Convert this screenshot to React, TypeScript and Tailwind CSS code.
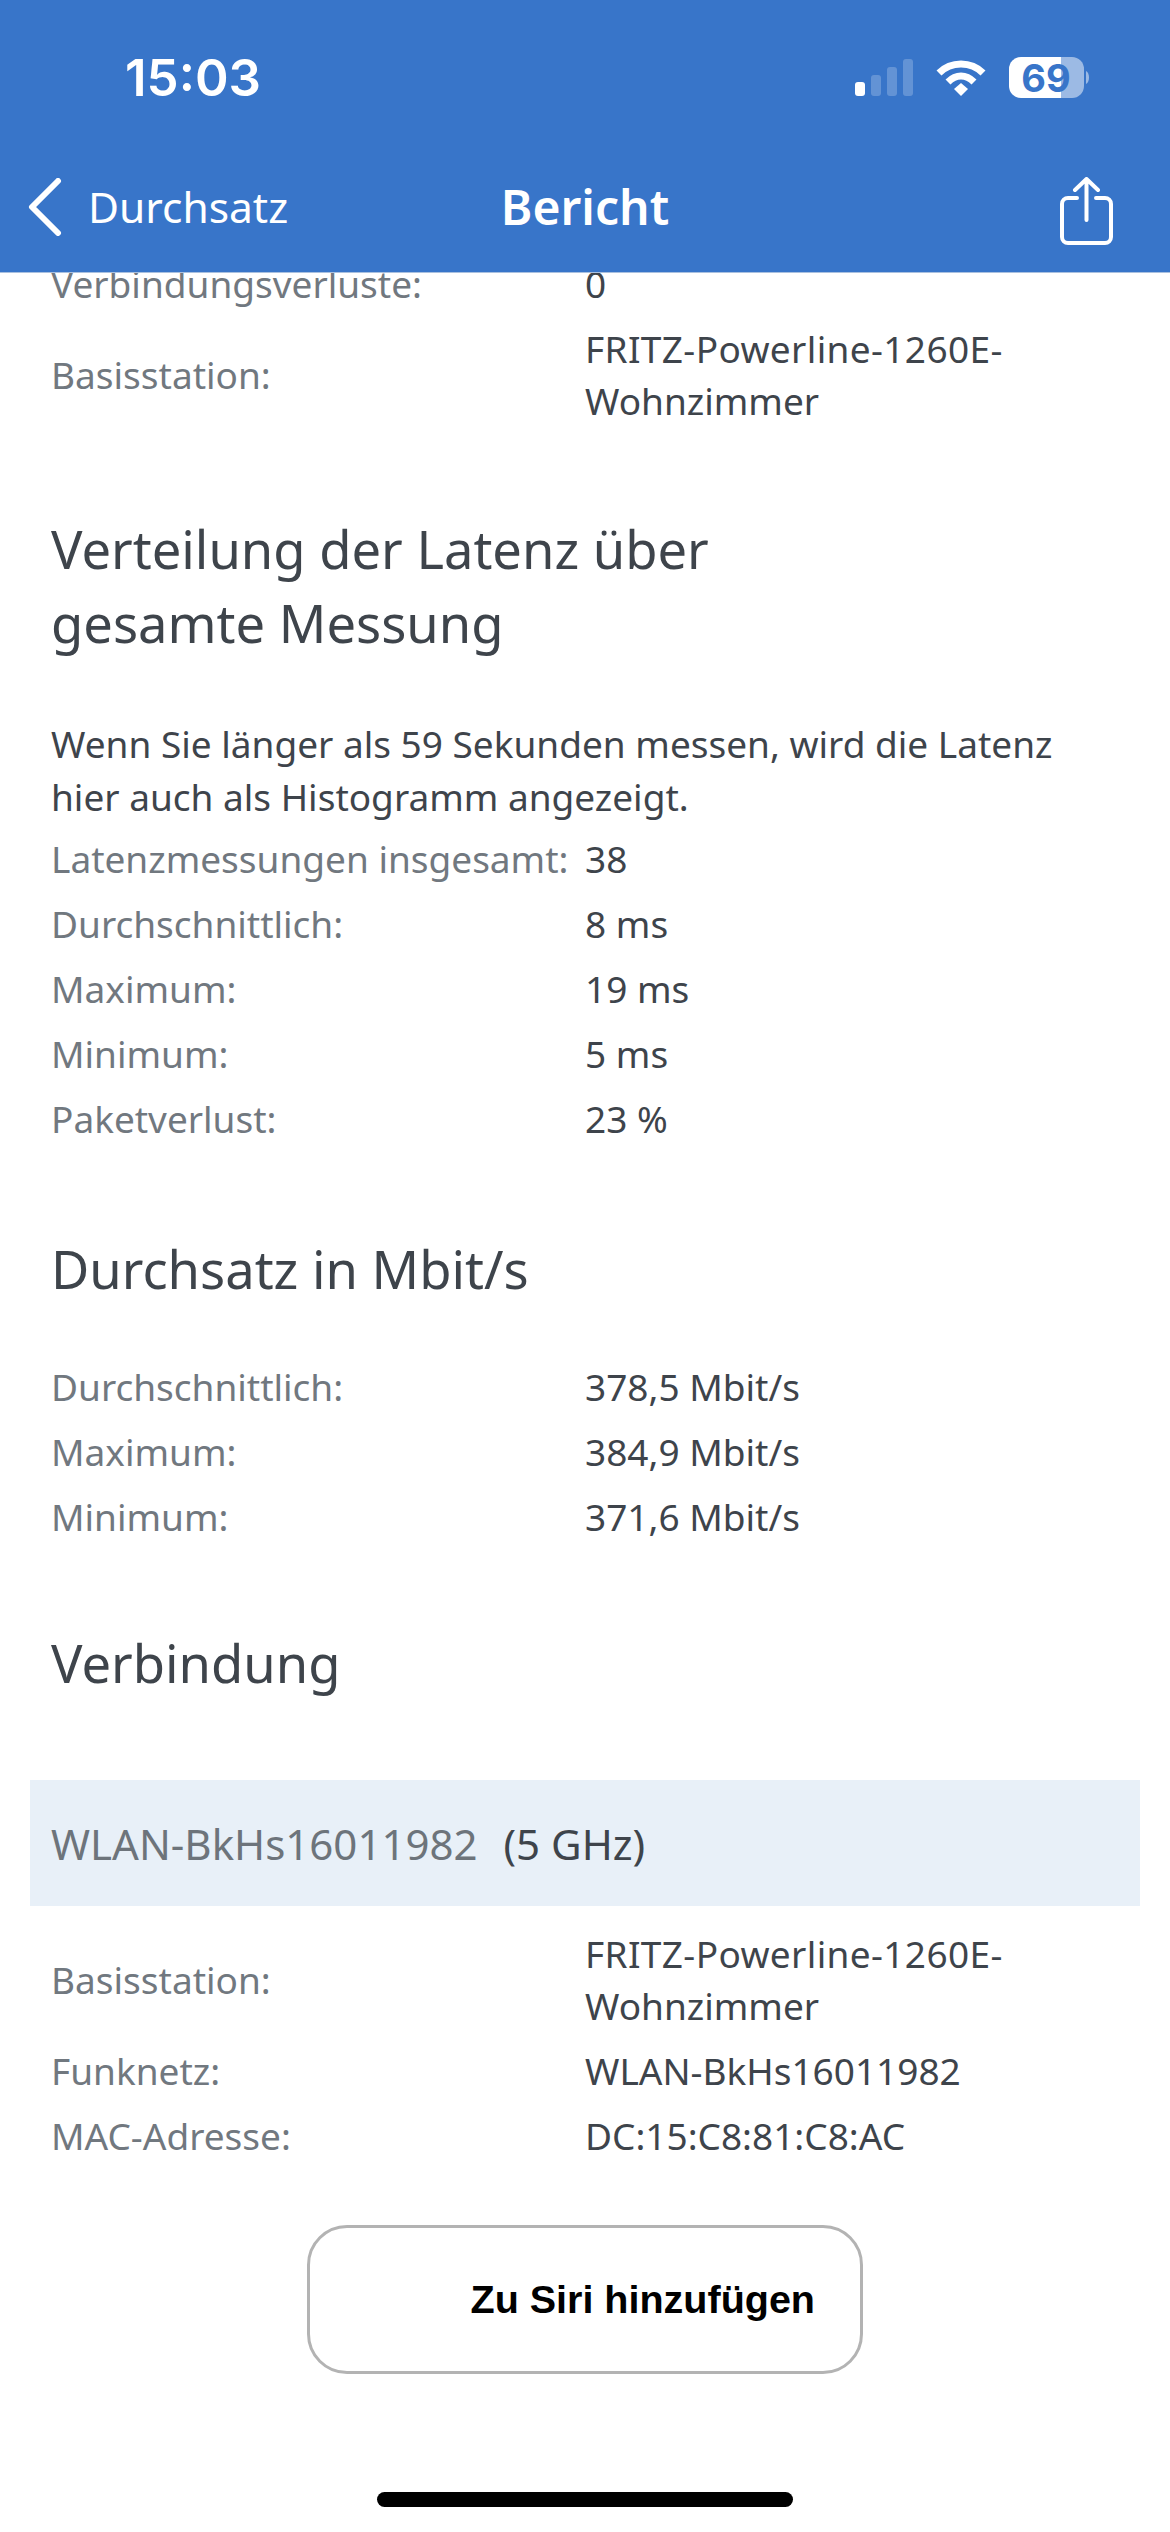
const font = { fontFamily: '"Noto Sans", sans-serif' };

function Row({ label, value, tall }: { label: string; value: React.ReactNode; tall?: boolean }) {
  return (
    <div className={`grid grid-cols-[534px_1fr] items-center pl-[51px] pr-[52px] text-[37px] leading-[52px] ${tall ? "h-[117px]" : "h-[65px]"}`}>
      <span className="text-[#71787f] whitespace-nowrap">{label}</span>
      <span className="text-[#3e444b]">{value}</span>
    </div>
  );
}

function Heading({ children, className }: { children: React.ReactNode; className: string }) {
  return <h2 className={`pl-[51px] pr-[52px] text-[52.500px] leading-[74px] text-[#3e444b] ${className}`}>{children}</h2>;
}

const Fritz = (
  <>
    <span className="tracking-[0.37px]">FRITZ-Powerline-1260E-</span>
    <br />
    Wohnzimmer
  </>
);

export default function App() {
  return (
    <div className="w-[1170px] h-[2532px] overflow-hidden bg-white flex flex-col" style={font}>
      <header className="h-[273px] shrink-0 bg-[#3875c9] text-white relative z-10 border-b border-[#a9c0df]">
        <div className="h-[157px] flex items-start justify-between">
          <span className="mt-[50px] ml-[125px] text-[51px] leading-[56px] font-semibold" style={{ fontFamily: '"Inter", sans-serif' }}>15:03</span>
          <div className="mt-[57px] mr-[79px] flex items-start">
            <svg width="58" height="37" viewBox="0 0 58 37" fill="white" className="mt-[2px]">
              <rect x="0" y="23" width="10" height="14" rx="3" />
              <rect x="16" y="16" width="10" height="21" rx="3" opacity="0.22" />
              <rect x="32" y="8" width="10" height="29" rx="3" opacity="0.22" />
              <rect x="48" y="0" width="10" height="37" rx="3" opacity="0.22" />
            </svg>
            <svg width="50" height="37" viewBox="0 0 50 37" fill="none" stroke="white" className="ml-[23px] mt-[2px]">
              <path d="M3 14 C15 2 35 2 47 14" strokeWidth="7" />
              <path d="M12 23 C20 15 30 15 38 23" strokeWidth="7" />
              <path d="M18 30 L25 24 L32 30 L25 37 Z" fill="white" stroke="none" />
            </svg>
            <svg width="82" height="41" viewBox="0 0 82 41" className="ml-[23px]">
              <path d="M52 0 H12 A12 12 0 0 0 0 12 V29 A12 12 0 0 0 12 41 H52 Z" fill="white" />
              <path d="M52 0 H63 A12 12 0 0 1 75 12 V29 A12 12 0 0 1 63 41 H52 Z" fill="white" fillOpacity="0.5" />
              <path d="M77 14 C81 16 81 25 77 27 Z" fill="white" fillOpacity="0.5" />
              <text x="37" y="35" textAnchor="middle" fontSize="38" fontWeight="700" fill="#3875c9" style={{ fontFamily: '"Inter", sans-serif' }}>69</text>
            </svg>
          </div>
        </div>
        <nav className="grid grid-cols-[1fr_auto_1fr] items-center h-[100px] px-[28px]">
          <div className="flex items-center">
            <svg width="34" height="58" viewBox="0 0 34 58" fill="none" stroke="white" strokeWidth="6" strokeLinecap="round" strokeLinejoin="round">
              <path d="M30 3 L4 29 L30 55" />
            </svg>
            <span className="ml-[26px] text-[42.500px] leading-[52px]">Durchsatz</span>
          </div>
          <span className="text-[48px] leading-[60px] font-semibold">Bericht</span>
          <div className="flex justify-end pr-[29px] mt-[8px]">
            <svg width="53" height="68" viewBox="0 0 53 68" fill="none" stroke="white" strokeWidth="4" strokeLinecap="round" strokeLinejoin="round">
              <path d="M17 21 H8 A6 6 0 0 0 2 27 V60 A6 6 0 0 0 8 66 H45 A6 6 0 0 0 51 60 V27 A6 6 0 0 0 45 21 H36" />
              <path d="M26.500 43 V2 M15 13 L26.500 2 L38 13" />
            </svg>
          </div>
        </nav>
      </header>

      <main className="flex-1 min-h-0 overflow-hidden">
        <div className="-mt-[22px]">
          <Row label="Verbindungsverluste:" value="0" />
          <Row label="Basisstation:" value={Fritz} tall />
        </div>

        <Heading className="mt-[79px]">
          Verteilung der Latenz über
          <br />
          gesamte Messung
        </Heading>

        <p className="mt-[57px] pl-[51px] pr-[52px] text-[37px] leading-[53px] text-[#3e444b]">
          Wenn Sie länger als 59 Sekunden messen, wird die Latenz
          <br />
          hier auch als Histogramm angezeigt.
        </p>

        <div className="mt-[3px]">
          <Row label="Latenzmessungen insgesamt:" value="38" />
          <Row label="Durchschnittlich:" value="8 ms" />
          <Row label="Maximum:" value="19 ms" />
          <Row label="Minimum:" value="5 ms" />
          <Row label="Paketverlust:" value="23 %" />
        </div>

        <Heading className="mt-[81px]">Durchsatz in Mbit/s</Heading>

        <div className="mt-[48px]">
          <Row label="Durchschnittlich:" value="378,5 Mbit/s" />
          <Row label="Maximum:" value="384,9 Mbit/s" />
          <Row label="Minimum:" value="371,6 Mbit/s" />
        </div>

        <Heading className="mt-[77px]">Verbindung</Heading>

        <div className="mt-[80px] mx-[30px] h-[126px] bg-[#e8f0f8] flex items-center pl-[21px] pr-[22px] text-[42px]">
          <span className="text-[#6d747b]">WLAN-BkHs16011982</span>
          <span className="ml-[26px] text-[#3e444b]">(5 GHz)</span>
        </div>

        <div className="mt-[15px]">
          <Row label="Basisstation:" value={Fritz} tall />
          <Row label="Funknetz:" value="WLAN-BkHs16011982" />
          <Row label="MAC-Adresse:" value="DC:15:C8:81:C8:AC" />
        </div>

        <div className="mt-[57px] flex justify-center">
          <button
            className="w-[556px] h-[149px] rounded-[40px] border-[3px] border-[#b3b3b3] bg-white text-black text-[39.500px] font-bold flex items-center justify-end pr-[45px]"
            style={{ fontFamily: '"Liberation Sans", sans-serif' }}
          >
            Zu Siri hinzufügen
          </button>
        </div>

        <div className="mt-[118px] mx-auto w-[416px] h-[15px] rounded-full bg-black" />
      </main>
    </div>
  );
}
